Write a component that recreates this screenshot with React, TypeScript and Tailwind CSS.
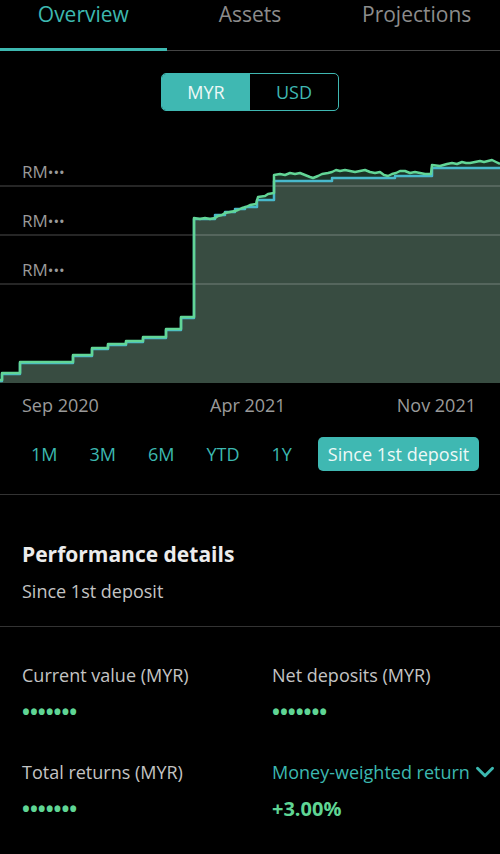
import React from "react";
import { ChevronDown } from "lucide-react";

const greenPts =
  "0,380 2,380 2,373 20,373 20,362 73,362 73,355 92,355 92,348 108,348 108,344 126,344 126,341 143,341 143,337 166,337 166,329 181,329 181,317 194,317 194,218 200,219 205,218 210,219 215,218 218,216 222,215 225,213 230,212 235,211 238,210 242,208 246,207 250,205 256,204 258,197 265,196 268,194 274,193 274,175 280,174 285,175 290,173 295,174 300,173 305,175 310,177 313,178 318,176 322,174 328,173 332,172 336,170 340,171 345,170 350,171 355,172 360,171 365,170 370,172 375,173 380,172 384,175 388,176 392,174 396,173 400,171 405,171 410,173 415,172 420,173 425,174 431,174 432,165 440,166 447,164 452,163 457,164 462,162 466,163 470,163 475,162 480,161 484,162 488,161 492,160 496,162 500,164";

const bluePts =
  "0,381 2,381 2,374 20,374 20,363 73,363 73,356 92,356 92,349 108,349 108,345 126,345 126,342 143,342 143,338 166,338 166,330 181,330 181,318 194,318 194,219 215,219 215,215 225,215 225,212 235,212 235,209 245,209 245,207 257,207 257,200 274,200 274,181 332,181 332,178 395,178 395,176 432,176 432,168 500,168";

const ranges = ["1M", "3M", "6M", "YTD", "1Y"];

function Chart() {
  return (
    <div className="relative mt-[19px] h-[255px] w-full">
      <svg width="500" height="255" viewBox="0 130 500 255" className="block">
        <polygon points={`${greenPts} 500,383 0,383`} fill="#1b3327" />
        <polygon points={`${bluePts} 500,383 0,383`} fill="#384c41" />
        {[186, 235, 284].map((y) => (
          <line key={y} x1="0" x2="500" y1={y} y2={y} stroke="rgba(255,255,255,0.3)" strokeWidth="1.2" />
        ))}
        <polyline points={bluePts} fill="none" stroke="#48b9cb" strokeWidth="2.5" strokeLinejoin="round" />
        <polyline points={greenPts} fill="none" stroke="#62d596" strokeWidth="2.5" strokeLinejoin="round" />
      </svg>
      {[30, 79, 128].map((t) => (
        <div
          key={t}
          className="absolute left-[22px] text-[17px] leading-[24px] text-[#9a9a9a]"
          style={{ top: t }}
        >
          RM<span className="text-[15px]">•••</span>
        </div>
      ))}
    </div>
  );
}

function Stat({ label, value, accent }: { label: React.ReactNode; value: string; accent?: boolean }) {
  return (
    <div>
      <div className="text-[18px] leading-[24px] text-[#c4c4c4]">{label}</div>
      <div
        className={
          accent
            ? "mt-[13px] text-[20px] font-bold leading-[24px] text-[#5fd594]"
            : "mt-[13px] text-[21px] font-bold leading-[24px] text-[#5fd594]"
        }
      >
        {value}
      </div>
    </div>
  );
}

export default function App() {
  return (
    <div className="min-h-[854px] w-[500px] overflow-hidden bg-black font-['Open_Sans',sans-serif]">
      {/* tabs */}
      <div className="relative flex h-[51px] border-b border-[#444]">
        {["Overview", "Assets", "Projections"].map((t, i) => (
          <div
            key={t}
            className={
              i === 0
                ? "relative flex-1 text-center text-[21px] leading-[28px] text-[#3db8b0]"
                : "relative flex-1 text-center text-[21px] leading-[28px] text-[#8c8c8c]"
            }
          >
            {t}
            {i === 0 && <div className="absolute bottom-[-1px] left-0 h-[3px] w-full bg-[#3db8b0]" />}
          </div>
        ))}
      </div>

      {/* currency toggle */}
      <div className="flex justify-center pt-[22px]">
        <div className="flex h-[38px] w-[178px] overflow-hidden rounded-[5px] border-[1.5px] border-[#3fb8b2]">
          <div className="flex flex-1 items-center justify-center bg-[#3fb8b2] text-[18px] text-[#eef8f7]">MYR</div>
          <div className="flex flex-1 items-center justify-center text-[18px] text-[#3fb8b2]">USD</div>
        </div>
      </div>

      <Chart />

      {/* x axis */}
      <div className="mt-[9px] flex justify-between pl-[22px] pr-[24px] text-[18px] leading-[22px] text-[#9a9a9a]">
        <span>Sep 2020</span>
        <span>Apr 2021</span>
        <span>Nov 2021</span>
      </div>

      {/* range selector */}
      <div className="mt-[21px] flex pl-[15px]">
        {ranges.map((r) => (
          <div key={r} className="flex h-[34px] items-center px-4 text-[18px] text-[#3cb8b0]">
            {r}
          </div>
        ))}
        <div className="ml-[10px] flex h-[34px] items-center rounded-[5px] bg-[#3fb8b2] px-[10px] text-[18px] text-[#eef8f7]">
          Since 1st deposit
        </div>
      </div>

      <div className="mt-[23px] h-px bg-[#333]" />

      {/* performance */}
      <div className="px-[22px] pb-[23px] pt-[45px]">
        <div className="text-[21px] font-bold leading-[28px] text-[#ececec]">Performance details</div>
        <div className="mt-[11px] text-[18px] leading-[24px] text-[#c4c4c4]">Since 1st deposit</div>
      </div>

      <div className="h-px bg-[#333]" />

      <div className="grid grid-cols-[250px_1fr] gap-y-[36px] pl-[22px] pt-[36px]">
        <Stat label="Current value (MYR)" value="•••••••" />
        <Stat label="Net deposits (MYR)" value="•••••••" />
        <Stat label="Total returns (MYR)" value="•••••••" />
        <Stat
          label={
            <span className="flex items-center whitespace-nowrap text-[#3cb8b0]">
              Money-weighted return
              <ChevronDown size={30} strokeWidth={2.4} className="-my-[4px] shrink-0" />
            </span>
          }
          value="+3.00%"
          accent
        />
      </div>
    </div>
  );
}
